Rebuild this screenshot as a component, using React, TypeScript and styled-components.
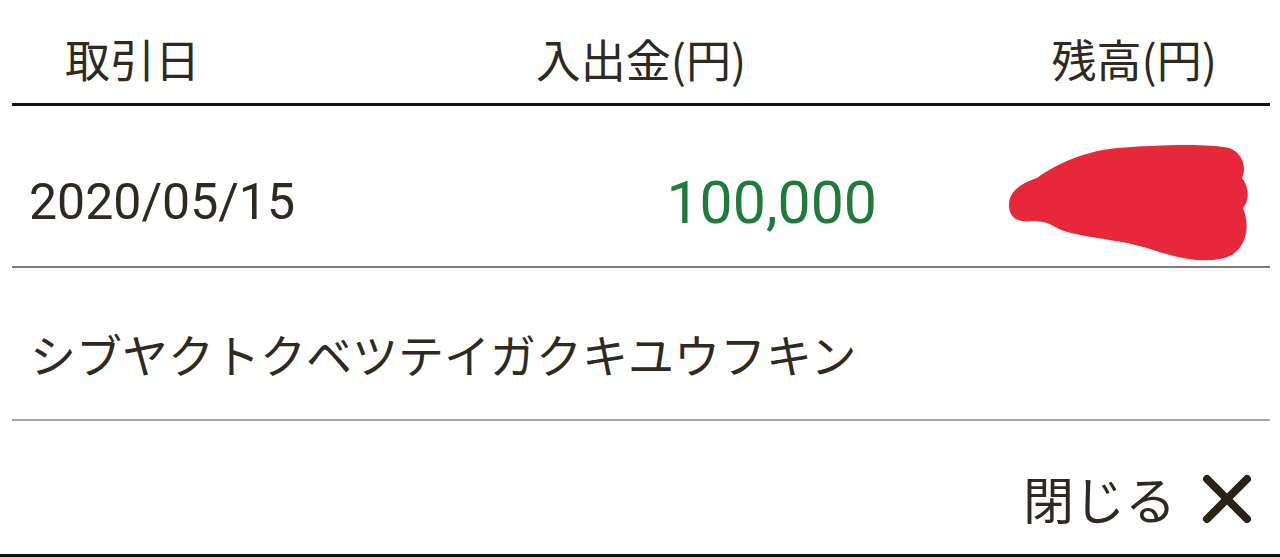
import React from "react";
import styled, { createGlobalStyle } from "styled-components";

const Global = createGlobalStyle`
  html, body { margin: 0; padding: 0; background: #ffffff; }
  body { font-family: Roboto, "Noto Sans CJK JP", sans-serif; color: #2e2a22; }
`;

const Page = styled.div`
  width: 1280px;
  height: 557px;
  box-sizing: border-box;
  border-bottom: 3px solid #111;
  background: #fff;
  overflow: hidden;
`;

const Panel = styled.div`
  margin: 0 10px 0 12px;
  display: flex;
  flex-direction: column;
`;

const HeaderRow = styled.div`
  height: 106px;
  box-sizing: border-box;
  padding-top: 14px;
  border-bottom: 3px solid #111;
  display: grid;
  grid-template-columns: 1fr auto 1fr;
  align-items: center;
  font-family: "Noto Sans CJK JP", sans-serif;
  font-size: 45px;
  color: #2e2a22;
`;

const HeadCell = styled.div<{ $align: "left" | "center" | "right" }>`
  text-align: ${(p) => p.$align};
  padding-left: ${(p) => (p.$align === "left" ? "53px" : "0")};
  padding-right: ${(p) => (p.$align === "right" ? "53px" : "0")};
  line-height: 1;
`;

const DataRow = styled.div`
  height: 162px;
  box-sizing: border-box;
  padding-top: 32px;
  border-bottom: 2px solid #7a7a7a;
  display: grid;
  grid-template-columns: 420px 445px 1fr;
  align-items: center;
`;

const DateCell = styled.div`
  padding-left: 17px;
  font-family: Roboto, sans-serif;
  font-size: 50px;
  line-height: 1;
  color: #2e2a22;
`;

const AmountCell = styled.div`
  text-align: right;
  font-family: Roboto, sans-serif;
  font-size: 59px;
  line-height: 1;
  color: #1f7a3e;
`;

const BalanceCell = styled.div`
  position: relative;
  height: 100%;
`;

const Blot = styled.svg`
  position: absolute;
  left: 130px;
  top: 5px;
`;

const MemoRow = styled.div`
  height: 153px;
  box-sizing: border-box;
  padding: 18px 0 0 18px;
  border-bottom: 2px solid #a6a6a6;
  display: flex;
  align-items: center;
  font-family: "Noto Sans CJK JP", sans-serif;
  font-size: 46px;
  line-height: 1;
  color: #2e2a22;
`;

const Footer = styled.div`
  height: 133px;
  flex-shrink: 0;
  box-sizing: border-box;
  padding: 22px 18px 0 0;
  display: flex;
  justify-content: flex-end;
  align-items: center;
`;

const CloseButton = styled.button`
  display: flex;
  align-items: center;
  gap: 26px;
  border: none;
  background: none;
  padding: 0;
  cursor: pointer;
  font-family: "Noto Sans CJK JP", sans-serif;
  font-size: 51px;
  line-height: 1;
  color: #2e2a22;
`;

export default function App() {
  return (
    <>
      <Global />
      <Page>
        <Panel>
          <HeaderRow>
            <HeadCell $align="left">取引日</HeadCell>
            <HeadCell $align="center">入出金(円)</HeadCell>
            <HeadCell $align="right">残高(円)</HeadCell>
          </HeaderRow>
          <DataRow>
            <DateCell>2020/05/15</DateCell>
            <AmountCell>100,000</AmountCell>
            <BalanceCell>
              <Blot width="245" height="125" viewBox="0 0 245 125">
                <path
                  d="M 2 62 C 2 48, 15 40, 30 35 C 50 20, 80 8, 110 5 C 150 2, 200 0, 222 5 C 236 10, 240 25, 235 35 C 243 45, 242 58, 236 65 C 242 80, 242 100, 225 112 C 205 122, 175 117, 140 105 C 110 96, 70 94, 52 86 C 42 80, 36 78, 25 78 C 10 80, 2 74, 2 62 Z"
                  fill="#e6283a"
                />
              </Blot>
            </BalanceCell>
          </DataRow>
          <MemoRow>シブヤクトクベツテイガクキユウフキン</MemoRow>
          <Footer>
            <CloseButton>
              閉じる
              <svg width="50" height="50" viewBox="0 0 50 50">
                <path
                  d="M 5 5 L 45 45 M 45 5 L 5 45"
                  stroke="#2a2418"
                  strokeWidth="8"
                  strokeLinecap="round"
                />
              </svg>
            </CloseButton>
          </Footer>
        </Panel>
      </Page>
    </>
  );
}
